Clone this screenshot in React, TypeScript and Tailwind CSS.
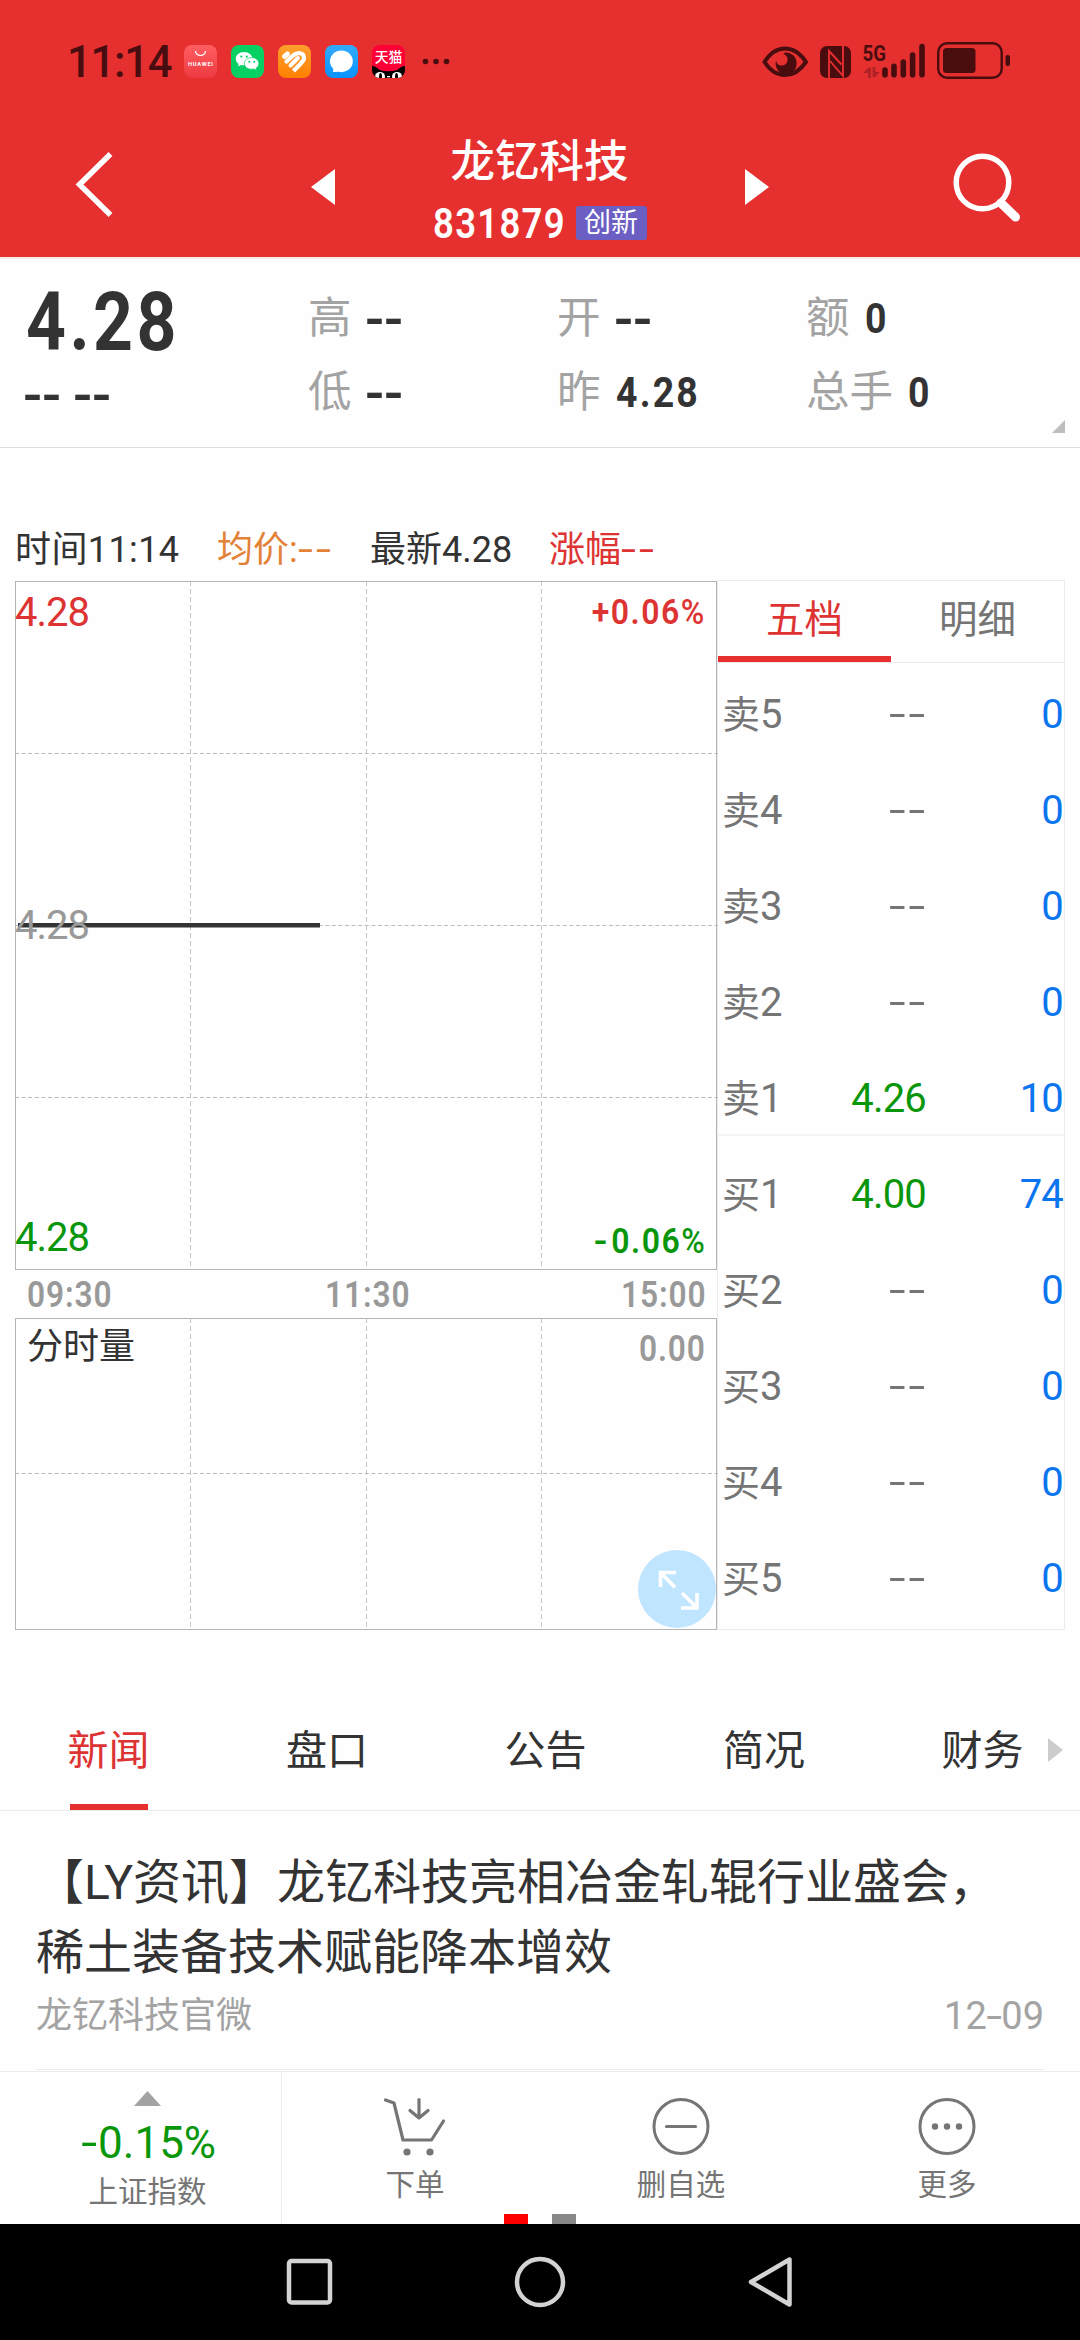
import React from "react";

const FONT = "font-['Roboto','Noto_Sans_CJK_SC',sans-serif]";

function StatusBar() {
  return (
    <div className="flex h-[123px] items-start pl-[67px] text-[#4a0d0f]">
      <div className="mt-[41px] w-[117px] text-[43.500px] leading-[44px] font-medium tracking-[-1.200px]">11:14</div>
      <div className="mt-[45px] flex gap-[14px]">
        <svg width="33" height="33" viewBox="0 0 33 33">
          <defs>
            <linearGradient id="hw" x1="0" y1="0" x2="0" y2="1">
              <stop offset="0" stopColor="#ff5e62" />
              <stop offset="1" stopColor="#ee3a42" />
            </linearGradient>
          </defs>
          <rect width="33" height="33" rx="8" fill="url(#hw)" />
          <path d="M11.5 6 a5 4.5 0 0 0 10 0" fill="none" stroke="#fff" strokeWidth="1.2" />
          <text x="16.5" y="21.2" textAnchor="middle" fontSize="5.6" fontWeight="700" fill="#fff" textLength="25">HUAWEI</text>
        </svg>
        <svg width="33" height="33" viewBox="0 0 33 33">
          <rect width="33" height="33" rx="8" fill="#06cf64" />
          <path d="M13 7c-4.800 0-8.200 3-8.200 6.700 0 2.200 1.100 4 2.900 5.200l-.7 2.500 2.800-1.500c1 .3 2 .4 3.200.4 4.800 0 8.400-3 8.400-6.600S17.800 7 13 7z" fill="#fff" />
          <circle cx="10.3" cy="11.600" r="1.100" fill="#06cf64" /><circle cx="15.800" cy="11.600" r="1.100" fill="#06cf64" />
          <path d="M20.700 12.600c-4.300 0-7.300 2.600-7.300 5.900s3 5.800 7.300 5.800c.9 0 1.700-.1 2.500-.3l2.500 1.400-.6-2.200c1.700-1.100 2.700-2.700 2.700-4.700 0-3.300-3-5.900-7.100-5.900z" fill="#fff" stroke="#06cf64" strokeWidth=".7" />
          <circle cx="18.300" cy="16.800" r="1" fill="#06cf64" /><circle cx="23.200" cy="16.800" r="1" fill="#06cf64" />
        </svg>
        <svg width="33" height="33" viewBox="0 0 33 33">
          <defs>
            <linearGradient id="hl" x1="0" y1="0" x2="0" y2="1">
              <stop offset="0" stopColor="#ff9f2e" />
              <stop offset="1" stopColor="#ff8000" />
            </linearGradient>
          </defs>
          <rect width="33" height="33" rx="8" fill="url(#hl)" />
          <g fill="none" stroke="#fff" strokeWidth="4.200" strokeLinecap="round">
            <path d="M6.500 11.500 L9.500 9" strokeWidth="5" />
            <path d="M8.500 16.500 L16 9.800" />
            <path d="M12.500 20.500 L20 13" strokeWidth="4" />
            <path d="M15.500 10.500 C20 6.500 25.500 8 26 12.500 C26.200 15 24.500 16.800 23 18.300 L15.500 26" strokeLinecap="butt" />
          </g>
        </svg>
        <svg width="33" height="33" viewBox="0 0 33 33">
          <defs>
            <linearGradient id="ms" x1="0" y1="0" x2="0" y2="1">
              <stop offset="0" stopColor="#33aaff" />
              <stop offset="1" stopColor="#0793ff" />
            </linearGradient>
          </defs>
          <rect width="33" height="33" rx="8" fill="url(#ms)" />
          <path d="M16.500 5.500a11.300 10.800 0 1 1-3 21.200l-5.500.4.300-3.200A11.300 10.800 0 0 1 16.500 5.500z" fill="#fff" />
        </svg>
        <svg width="33" height="33" viewBox="0 0 33 33">
          <defs><clipPath id="tm"><rect width="33" height="33" rx="8" /></clipPath></defs>
          <g clipPath="url(#tm)">
            <rect width="33" height="33" fill="#ff0036" />
            <path d="M0 21 Q4 21 7.500 25 Q16.500 27.500 25.500 25 Q29 21 33 21 V33 H0z" fill="#000" />
            <ellipse cx="8" cy="31.500" rx="5" ry="4.500" fill="#fff" />
            <ellipse cx="25" cy="31.500" rx="5" ry="4.500" fill="#fff" />
            <ellipse cx="8.500" cy="31.500" rx="1.500" ry="3.500" fill="#000" />
            <ellipse cx="24.500" cy="31.500" rx="1.500" ry="3.500" fill="#000" />
            <rect x="15" y="31" width="3" height="1.300" fill="#fff" />
            <text x="16.500" y="17.300" textAnchor="middle" fontSize="13.800" fontFamily="'Noto Sans CJK SC',sans-serif" fontWeight="500" fill="#fff">天猫</text>
          </g>
        </svg>
        <svg width="34" height="33" viewBox="0 0 34 33" fill="#4a0d0f">
          <circle cx="6.500" cy="16.500" r="2.800" /><circle cx="17" cy="16.500" r="2.800" /><circle cx="27.500" cy="16.500" r="2.800" />
        </svg>
      </div>
      <svg className="mr-[69px] ml-auto mt-[40px]" width="250" height="42" viewBox="760 40 250 42" fill="#4a0d0f">
        <path d="M763.500 62 Q772 48.500 784 48.500 Q796 48.500 805 62 Q796 75 784 75 Q772 75 763.500 62z" fill="none" stroke="#4a0d0f" strokeWidth="4" strokeLinejoin="round" />
        <path d="M784 52.500 a10.500 11 0 1 1 -9 8 q1 5 5.500 5 q5 0 6 -5 q.6 -5 -4 -6.500z" />
        <rect x="819" y="46" width="31" height="32" rx="7" />
        <path d="M828 78.500 V51 L840.500 64.500 M842 45.500 V76 L829 61" stroke="#e62f2f" strokeWidth="1.900" fill="none" />
        <text x="861.500" y="61" fontSize="22" fontWeight="700" textLength="23.500" lengthAdjust="spacingAndGlyphs">5G</text>
        <g fill="none" stroke="#b02226" strokeWidth="2.800"><path d="M868.500 78 V68 M873 67 V77" /></g>
        <path d="M862 73 l6 -6 v6z M873.500 72 h5 l-5 6z" fill="#b02226" />
        <g stroke="#4a0d0f" strokeWidth="5.600" strokeLinecap="round">
          <path d="M884 70 V74.700 M893 66.300 V74.700 M902.300 62 V74.700 M911.600 55 V74.700 M921 46.500 V74.700" />
        </g>
        <rect x="937.200" y="43.200" width="63.500" height="34.500" rx="9" fill="none" stroke="#4a0d0f" strokeWidth="2.400" />
        <rect x="942" y="48" width="32.500" height="25" rx="3.500" />
        <rect x="1004.500" y="55" width="4.500" height="11" rx="2" />
      </svg>
    </div>
  );
}

function Header() {
  return (
    <header className="h-[257px] shrink-0 bg-[#e62f2f]">
      <StatusBar />
      <div className="flex h-[134px] items-start">
        <svg className="mt-[25px] ml-[72px]" width="46" height="72" viewBox="0 0 46 72" fill="none" stroke="#fff" strokeWidth="5.500">
          <path d="M38.500 6 L7.500 36.500 L38.500 67" />
        </svg>
        <svg className="mt-[46px] ml-[192.500px]" width="24" height="36" viewBox="0 0 24 36"><path d="M0 18 L24 0 V36z" fill="#fff" /></svg>
        <div className="flex w-[410px] flex-col items-center text-white">
          <h1 className="mt-[15px] text-[44.500px] leading-[48px] font-medium">龙钇科技</h1>
          <div className="mt-[20px] flex items-center gap-[11px]">
            <span className="w-[132px] text-[43px] leading-[34px] font-semibold"><span className="inline-block origin-left scale-x-[.850] tracking-[1.500px]">831879</span></span>
            <span className="flex h-[34px] w-[71px] items-center justify-center rounded-[3px] bg-[#6b5fc4] text-[27px] leading-none">创新</span>
          </div>
        </div>
        <svg className="mt-[46px]" width="24" height="36" viewBox="0 0 24 36"><path d="M24 18 L0 0 V36z" fill="#fff" /></svg>
        <svg className="mt-[27px] ml-[180px]" width="76" height="76" viewBox="948 150 76 76" fill="none" stroke="#fff">
          <circle cx="981.500" cy="182.500" r="26.300" strokeWidth="5.500" />
          <path d="M1000 203 L1014.500 217" strokeWidth="9" strokeLinecap="round" />
        </svg>
      </div>
    </header>
  );
}

const bigDash = "inline-block origin-left scale-x-[1.300] text-[44px] leading-[44px] font-bold text-[#333] font-['Liberation_Sans',sans-serif]";

function Stat({ label, value }: { label: string; value: string }) {
  return (
    <div className="flex h-[74px] items-center">
      <span className="text-[43.500px] leading-[60px] text-[#a3a3a3]">{label}</span>
      {value === "--" ? (
        <span className={`${bigDash} -mt-[3px] ml-[13px]`}>--</span>
      ) : (
        <span className="-mt-[3px] ml-[15px] inline-block origin-left scale-x-[.870] text-[43px] leading-[44px] font-bold tracking-[2.500px] text-[#333]">{value}</span>
      )}
    </div>
  );
}

function Quote() {
  return (
    <section className="relative flex h-[191px] shrink-0 border-t-2 border-b border-t-[#f5ecec] border-b-[#dedede] pl-[26px]">
      <div className="w-[282px]">
        <div className="mt-[22px] text-[81px] leading-[84px] font-bold text-[#333]"><span className="inline-block origin-left scale-x-[.860] tracking-[4px]">4.28</span></div>
        <div className="-ml-[3px] mt-[7px] flex">
          <span className={`${bigDash} mr-[21px]`}>--</span>
          <span className={bigDash}>--</span>
        </div>
      </div>
      <div className="mt-[23px] w-[249px]"><Stat label="高" value="--" /><Stat label="低" value="--" /></div>
      <div className="mt-[23px] w-[249px]"><Stat label="开" value="--" /><Stat label="昨" value="4.28" /></div>
      <div className="mt-[23px]"><Stat label="额" value="0" /><Stat label="总手" value="0" /></div>
      <svg className="absolute right-[15px] bottom-[14px]" width="13" height="13"><path d="M13 0 V13 H0z" fill="#bdbdbd" /></svg>
    </section>
  );
}

function Grid({ height, rows }: { height: number; rows: number[] }) {
  return (
    <svg className="absolute inset-0" width="703" height={height} fill="none">
      <g stroke="#c8c8c8" strokeDasharray="5 3">
        {[175, 351, 526].map((x) => <path key={x} d={`M${x + 0.5} 0 V${height}`} />)}
      </g>
      <g stroke="#bcbcbc" strokeDasharray="4 2.600">
        {rows.map((y) => <path key={y} d={`M0 ${y + 0.5} H703`} />)}
      </g>
      <rect x=".500" y=".500" width="701" height={height - 1} stroke="#b4b4b4" />
    </svg>
  );
}

const percent = "absolute right-[11px] origin-right scale-x-[.900] text-[35.500px] leading-[36px] font-semibold tracking-[1.700px]";
const axis = "inline-block origin-left scale-x-[.880] tracking-[1px]";

function Charts() {
  return (
    <div className="w-[702px]">
      <div className="relative h-[689px]">
        <Grid height={689} rows={[172, 344, 516]} />
        <svg className="absolute top-[342px] left-[3px]" width="303" height="5"><rect width="302" height="4.500" fill="#333" /></svg>
        <span className="absolute top-[12px] left-0 text-[40px] leading-[40px] tracking-[-1px] text-[#dd3333]">4.28</span>
        <span className="absolute top-[325px] left-0 text-[40px] leading-[40px] tracking-[-1px] text-[#999]">4.28</span>
        <span className="absolute top-[637px] left-0 text-[40px] leading-[40px] tracking-[-1px] text-[#0a960a]">4.28</span>
        <span className={`${percent} top-[13px] text-[#dd3333]`}>+0.06<span className="font-medium">%</span></span>
        <span className={`${percent} top-[642px] text-[#0a960a]`}><span className="mr-[2px] inline-block origin-right scale-x-[1.200]">-</span>0.06<span className="font-medium">%</span></span>
      </div>
      <div className="flex h-[48px] items-center justify-between pt-px pr-[13px] pl-[12px] text-[36px] leading-[36px] font-semibold text-[#999]">
        <span className="w-[85px]"><span className={axis}>09:30</span></span>
        <span className="w-[84px]"><span className={axis}>11:30</span></span>
        <span className="w-[83px]"><span className={axis}>15:00</span></span>
      </div>
      <div className="relative h-[312px]">
        <Grid height={312} rows={[155]} />
        <div className="absolute inset-x-0 top-0 flex justify-between pr-[13px] pl-[12px]">
          <span className="mt-[9px] text-[36px] leading-[40px] text-[#333]">分时量</span>
          <span className="mt-[13px] w-[65px] text-[36px] leading-[36px] font-semibold text-[#999]"><span className={axis}>0.00</span></span>
        </div>
        <svg className="absolute right-px bottom-[2px]" width="78" height="78" viewBox="0 0 78 78">
          <circle cx="39" cy="39" r="39" fill="#c0e5ff" />
          <path d="M22.500 37 V22.500 H38 M22.500 22.500 L37 37.500 M59 43 V58 H43 M59 58 L44 43" fill="none" stroke="#fff" strokeWidth="3.600" />
        </svg>
      </div>
    </div>
  );
}

const sells = [["卖5", "--", "0"], ["卖4", "--", "0"], ["卖3", "--", "0"], ["卖2", "--", "0"], ["卖1", "4.26", "10"]];
const buys = [["买1", "4.00", "74"], ["买2", "--", "0"], ["买3", "--", "0"], ["买4", "--", "0"], ["买5", "--", "0"]];

function Level({ row }: { row: string[] }) {
  const [name, price, vol] = row;
  return (
    <div className="grid h-[96px] grid-cols-[90px_114px_1fr] items-center pr-px pl-[4px] text-[38px] leading-[56px] text-[#757575]">
      <span>{name.slice(0, 1)}<span className="text-[40px]">{name.slice(1)}</span></span>
      {price === "--" ? (
        <span className="-mr-[2px] text-right text-[40px]"><span className="inline-block origin-right scale-x-[1.500] tracking-[2px]">--</span></span>
      ) : (
        <span className="text-right text-[40px] tracking-[-0.800px] text-[#0a960a]">{price}</span>
      )}
      <span className="text-right text-[40px] tracking-[-0.800px] text-[#0a75ee]">{vol}</span>
    </div>
  );
}

function OrderBook() {
  return (
    <div className="h-[1050px] w-[348px] border border-[#ececec]">
      <div className="flex h-[82px] border-b border-[#ececec] text-[38.500px] leading-[68px]">
        <div className="w-[173px] border-b-[6px] border-[#e62f2f] pt-[5px] text-center text-[#dd3333]">五档</div>
        <div className="flex-1 pt-[5px] text-center text-[#757575]">明细</div>
      </div>
      <div className="h-[473px] border-b-2 border-[#f5f5f5]">
        <div className="pt-[4px]">{sells.map((r) => <Level key={r[0]} row={r} />)}</div>
      </div>
      <div className="pt-[11px]">{buys.map((r) => <Level key={r[0]} row={r} />)}</div>
    </div>
  );
}

const thinDash = "inline-block origin-left scale-x-[1.500] tracking-[2px]";

function Minute() {
  return (
    <section className="h-[1183px] shrink-0">
      <div className="flex h-[132px] items-end pl-[15px] text-[36px] leading-[60px] text-[#333]">
        <span className="w-[202px] tracking-[0.400px]">时间11:14</span>
        <span className="w-[153px] text-[#e38136]">均价:<span className={thinDash}>--</span></span>
        <span className="w-[179px]">最新4.28</span>
        <span className="text-[#dd3333]">涨幅<span className={thinDash}>--</span></span>
      </div>
      <div className="flex pl-[15px]">
        <div className="mt-px"><Charts /></div>
        <OrderBook />
      </div>
    </section>
  );
}

function News() {
  return (
    <section className="h-[440px] shrink-0">
      <nav className="flex h-[180px] items-end border-b border-[#ececec] text-[41px] text-[#333]">
        {["新闻", "盘口", "公告", "简况", "财务"].map((t, i) => (
          <div key={t} className="w-[218.500px] shrink-0 pl-[67.500px]">
            <div className={i === 0 ? "flex h-[120px] w-[82px] flex-col justify-between text-[#dd3333]" : "flex h-[120px] w-[90px] flex-col"}>
              <span className="mt-[31px] leading-[60px]">{t}</span>
              {i === 0 && <span className="ml-[2px] h-[6px] w-[78px] bg-[#e62f2f]" />}
            </div>
          </div>
        ))}
        <svg className="mb-[48px] -ml-[45px] shrink-0" width="15" height="24"><path d="M0 0 L15 12 L0 24z" fill="#ccc" /></svg>
      </nav>
      <article className="mx-[36px] h-[259px] border-b border-[#ececec]">
        <h2 className="pt-[37px] text-[48px] leading-[70px] whitespace-nowrap text-[#333]">【LY资讯】龙钇科技亮相冶金轧辊行业盛会，<br />稀土装备技术赋能降本增效</h2>
        <div className="flex h-[56px] items-center justify-between text-[36px] text-[#a3a3a3]">
          <span>龙钇科技官微</span>
          <span className="text-[38px]">12<span className="mx-[2px] inline-block scale-x-[1.500]">-</span>09</span>
        </div>
      </article>
    </section>
  );
}

const ring = "fill-none stroke-[#757575] stroke-3";

function BottomBar() {
  return (
    <footer className="relative flex h-[153px] shrink-0 border-t border-[#ececec] text-[29.500px] text-[#757575]">
      <div className="flex w-[282px] flex-col items-center border-r border-[#ececec] pl-[14px]">
        <svg className="mt-[19px]" width="27" height="15"><path d="M13.500 0 L27 15 H0z" fill="#a3a3a3" /></svg>
        <span className="mt-[11px] pl-[4px] text-[44px] leading-[52px] text-[#0a960a]"><span className="mr-[3px] inline-block scale-x-[1.300]">-</span>0.15%</span>
        <span className="mt-[3px] leading-[40px]">上证指数</span>
      </div>
      <div className="flex flex-1 flex-col items-center">
        <svg className="mt-[24px]" width="64" height="62" viewBox="383 2096 64 62" fill="none" stroke="#757575" strokeWidth="3.200" strokeLinecap="round" strokeLinejoin="round">
          <path d="M385.500 2100 L394 2103 L403 2140 H431.500 L443.500 2121 M419 2099.500 V2118 M410 2110.500 L419 2118 L428 2110.500" />
          <circle cx="407" cy="2152" r="3.600" fill="#757575" stroke="none" /><circle cx="430" cy="2152" r="3.600" fill="#757575" stroke="none" />
        </svg>
        <span className="mt-[7px] leading-[40px]">下单</span>
      </div>
      <div className="flex flex-1 flex-col items-center">
        <svg className="mt-[24px]" width="64" height="62" viewBox="0 0 64 62">
          <circle cx="32" cy="30.500" r="27" className={ring} /><path d="M17.500 30.500 H46.500" stroke="#757575" strokeWidth="3.200" strokeLinecap="round" />
        </svg>
        <span className="mt-[7px] leading-[40px]">删自选</span>
      </div>
      <div className="flex flex-1 flex-col items-center">
        <svg className="mt-[24px]" width="64" height="62" viewBox="0 0 64 62">
          <circle cx="32" cy="30.500" r="27" className={ring} />
          <g fill="#757575"><circle cx="20" cy="30.500" r="3.200" /><circle cx="32" cy="30.500" r="3.200" /><circle cx="44" cy="30.500" r="3.200" /></g>
        </svg>
        <span className="mt-[7px] leading-[40px]">更多</span>
      </div>
      <div className="absolute bottom-0 left-[504px] flex gap-[24px]">
        <span className="h-[10px] w-[24px] bg-[#ff0000]" />
        <span className="h-[10px] w-[24px] bg-[#888]" />
      </div>
    </footer>
  );
}

function SystemNav() {
  return (
    <div className="flex h-[116px] shrink-0 items-center justify-center gap-[174px] bg-black">
      <svg width="56" height="56" fill="none" stroke="#d3d3d3" strokeWidth="4.500"><rect x="7" y="7" width="41" height="41.500" rx="2.500" /></svg>
      <svg width="56" height="56" fill="none" stroke="#d3d3d3" strokeWidth="4.500"><circle cx="28" cy="28" r="23" /></svg>
      <svg width="56" height="56" fill="none" stroke="#d3d3d3" strokeWidth="4.500" strokeLinejoin="round"><path d="M47.500 5.500 V50.500 L9 28z" /></svg>
    </div>
  );
}

export default function App() {
  return (
    <div className={`flex h-[2340px] w-[1080px] flex-col overflow-hidden bg-[#fefefe] ${FONT}`}>
      <Header />
      <Quote />
      <Minute />
      <News />
      <BottomBar />
      <SystemNav />
    </div>
  );
}
